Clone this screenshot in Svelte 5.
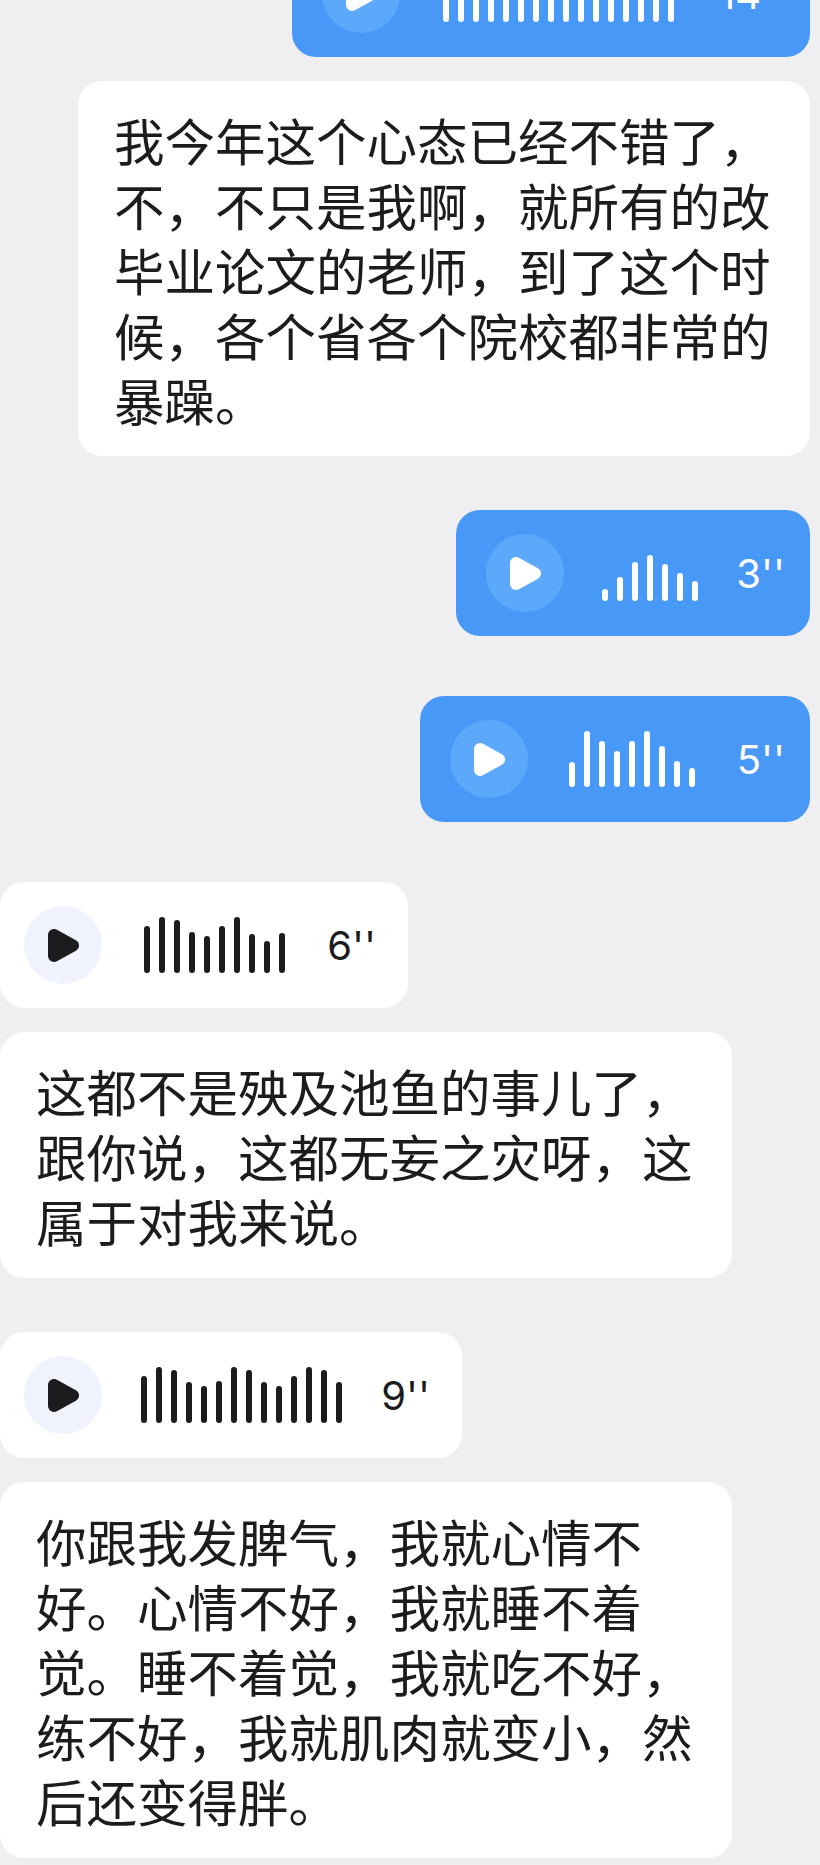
<script>
  const messages = [
    { mine: true, sec: 14, width: 518, bars: [56, 56, 56, 56, 56, 56, 56, 56, 56, 56, 56, 56, 56, 56, 56, 56] },
    { mine: true, text: '我今年这个心态已经不错了，不，不只是我啊，就所有的改毕业论文的老师，到了这个时候，各个省各个院校都非常的暴躁。' },
    { mine: true, gap: 'near', sec: 3, width: 354, bars: [12, 24, 39, 46, 37, 28, 20] },
    { mine: true, gap: 'far', sec: 5, width: 390, bars: [25, 56, 46, 36, 46, 56, 41, 26, 19] },
    { mine: false, gap: 'far', sec: 6, width: 408, bars: [47, 56, 53, 41, 37, 47, 56, 39, 32, 40] },
    { mine: false, text: '这都不是殃及池鱼的事儿了，跟你说，这都无妄之灾呀，这属于对我来说。' },
    { mine: false, gap: 'near', sec: 9, width: 462, bars: [47, 56, 53, 41, 37, 42, 56, 53, 41, 37, 47, 56, 53, 41] },
    { mine: false, text: '你跟我发脾气，我就心情不好。心情不好，我就睡不着觉。睡不着觉，我就吃不好，练不好，我就肌肉就变小，然后还变得胖。' }
  ]
</script>

<div class="chat">
  {#each messages as m}
    {#if m.text}
      <div class="bubble text" class:mine={m.mine}>{m.text}</div>
    {:else}
      <div class="bubble voice {m.gap ?? ''}" class:mine={m.mine} style="width: {m.width}px">
        <span class="play">
          <svg width="31" height="33" viewBox="0 0 31 33">
            <path d="M6 6 L6 27 L25 16.500 Z" />
          </svg>
        </span>
        <span class="bars">
          {#each m.bars as h}
            <i style="height: {h}px"></i>
          {/each}
        </span>
        <span class="sec">{m.sec}''</span>
      </div>
    {/if}
  {/each}
</div>

<style>
  :global(body) {
    background: #efeff2;
    overflow: hidden;
  }

  .chat {
    display: flex;
    flex-direction: column;
    align-items: flex-start;
    gap: 24px;
    height: 1865px;
    padding-right: 10px;
    box-sizing: border-box;
    overflow: hidden;
    font-family: 'Noto Sans CJK SC', sans-serif;
    color: #1c1c1e;
  }

  .bubble {
    background: #fff;
    border-radius: 24px;
    box-sizing: border-box;
    flex: none;
  }

  .bubble:first-child {
    margin-top: -69px;
  }

  .bubble.near {
    margin-top: 30px;
  }

  .bubble.far {
    margin-top: 36px;
  }

  .bubble.mine {
    align-self: flex-end;
  }

  .text {
    width: 732px;
    padding: 26px 36px 25px;
    font-size: 50.500px;
    line-height: 65px;
  }

  .text.mine {
    padding-bottom: 24px;
  }

  .voice {
    display: flex;
    align-items: center;
    height: 126px;
    padding: 0 32px 0 24px;
  }

  .voice.mine {
    background: #4898f8;
    color: #fff;
    padding: 0 25px 0 30px;
  }

  .play {
    flex: none;
    display: flex;
    align-items: center;
    justify-content: center;
    width: 78px;
    height: 78px;
    border-radius: 50%;
    background: #f0f3fe;
    fill: #1c1c1e;
    stroke: #1c1c1e;
  }

  .mine .play {
    background: #5ca8fa;
    fill: #fff;
    stroke: #fff;
  }

  .play svg {
    stroke-width: 12;
    stroke-linejoin: round;
    margin-left: 1px;
  }

  .bars {
    flex: 1;
    display: flex;
    align-items: flex-end;
    justify-content: center;
    gap: 9px;
    height: 56px;
    padding-right: 1px;
  }

  .bars i {
    width: 6px;
    border-radius: 3px;
    background: currentColor;
  }

  .sec {
    flex: none;
    font-family: Inter, sans-serif;
    font-size: 40px;
    line-height: 48px;
    margin-top: 2px;
  }
</style>
